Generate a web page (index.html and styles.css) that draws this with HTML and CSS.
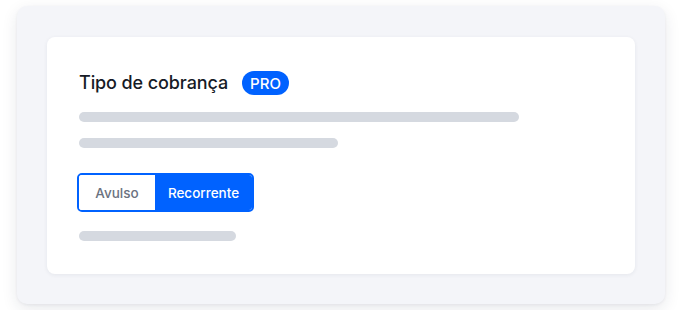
FILE: index.html
```html
<!DOCTYPE html>
<html lang="pt-BR">
<head>
    <meta charset="UTF-8">
    <meta name="viewport" content="width=device-width, initial-scale=1.0">
    <title>Tipo de cobrança</title>
    <link rel="stylesheet" href="styles.css">
</head>
<body>
    <div class="panel">
        <div class="card">
            <div class="card-header">
                <h3>Tipo de cobrança</h3>
                <span class="badge">PRO</span>
            </div>

            <div class="skeleton skeleton-long"></div>
            <div class="skeleton skeleton-mid"></div>

            <div class="toggle">
                <button class="toggle-option">Avulso</button>
                <button class="toggle-option active">Recorrente</button>
            </div>

            <div class="skeleton skeleton-short"></div>
        </div>
    </div>
</body>
</html>
```

FILE: styles.css
```css
* {
    margin: 0;
    padding: 0;
    box-sizing: border-box;
    font-family: Inter, 'Noto Sans', sans-serif;
}

body {
    background-color: white;
    padding: 6px 17px;
}

.panel {
    width: 648px;
    height: 298px;
    background-color: #f4f5f9;
    border-radius: 10px;
    box-shadow: 0 5px 16px rgba(30, 40, 70, 0.10), 0 1px 3px rgba(30, 40, 70, 0.06);
    padding: 31px 30px;
}

.card {
    height: 237px;
    background-color: white;
    border-radius: 8px;
    box-shadow: 0 1px 4px rgba(30, 40, 70, 0.07);
    padding: 34px 32px 0;
    display: flex;
    flex-direction: column;
}

.card-header {
    display: flex;
    align-items: center;
    gap: 14px;
    height: 24px;
}

.card-header h3 {
    font-size: 18px;
    font-weight: 500;
    color: #161b26;
    letter-spacing: -0.1px;
    margin-top: -2px;
}

.badge {
    background-color: #0062ff;
    color: white;
    font-size: 15px;
    font-weight: 500;
    height: 24px;
    padding: 0 8px;
    border-radius: 12px;
    display: inline-flex;
    align-items: center;
}

.skeleton {
    height: 10px;
    border-radius: 5px;
    background-color: #d5d9e0;
}

.skeleton-long {
    width: 440px;
    margin-top: 17px;
}

.skeleton-mid {
    width: 259px;
    margin-top: 16px;
}

.skeleton-short {
    width: 157px;
    margin-top: 19px;
}

.toggle {
    display: flex;
    width: 177px;
    height: 39px;
    margin-top: 25px;
    margin-left: -2px;
    border: 2px solid #0062ff;
    border-radius: 5px;
    overflow: hidden;
}

.toggle-option {
    border: none;
    background-color: white;
    color: #6b7280;
    font-size: 13.5px;
    font-weight: 500;
    width: 76px;
}

.toggle-option.active {
    flex: 1;
    background-color: #0062ff;
    color: white;
}
```
